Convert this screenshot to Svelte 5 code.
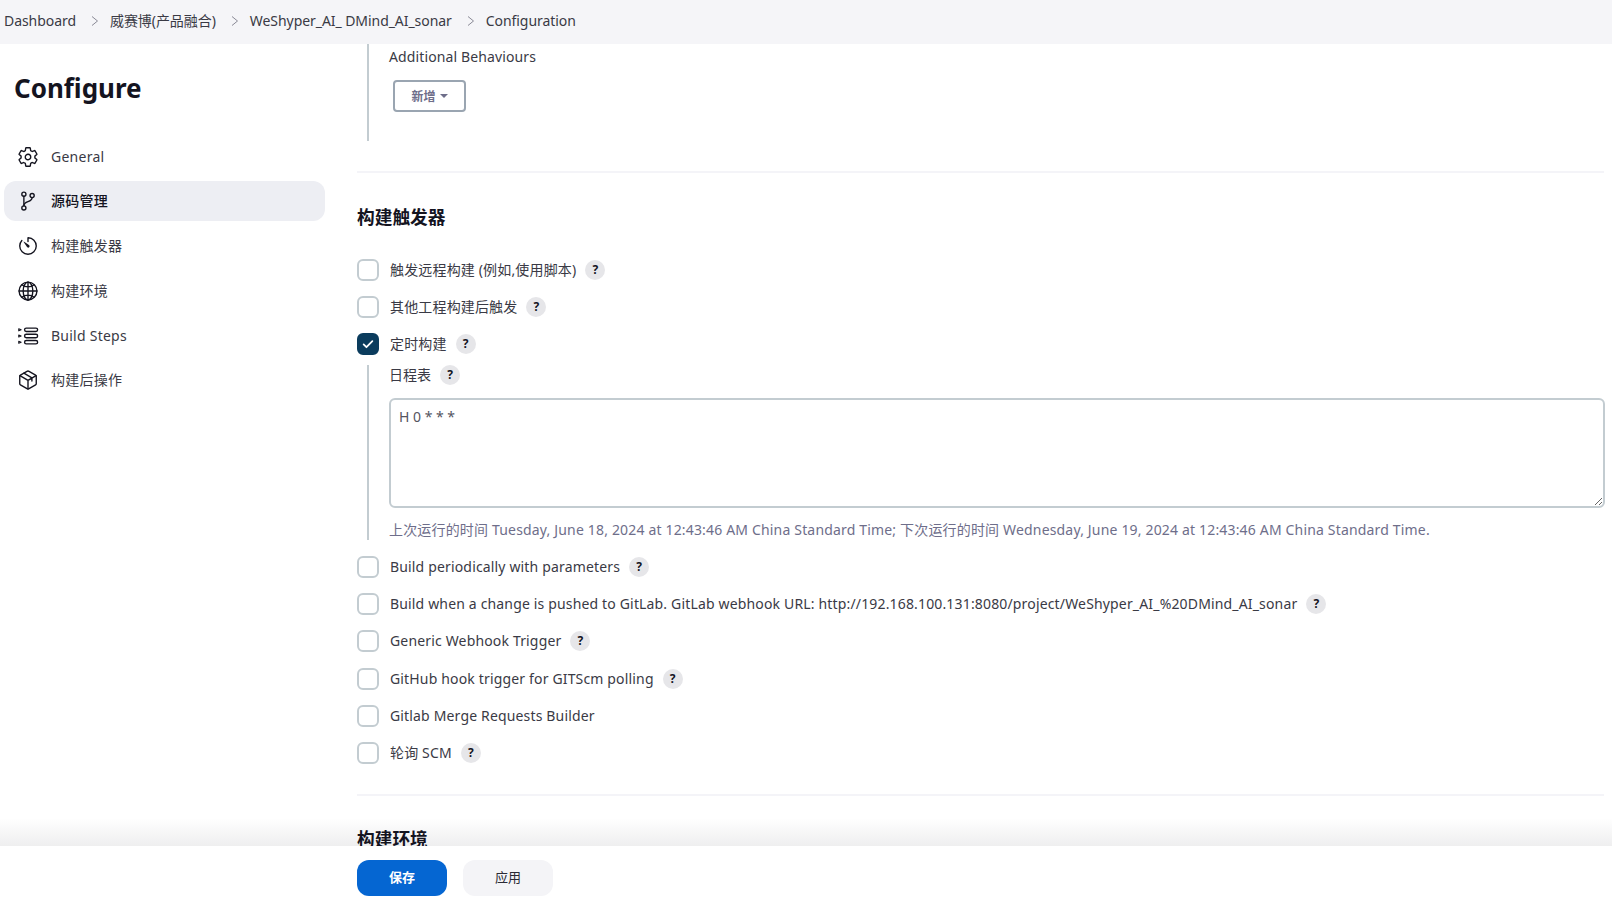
<script>
  const crumbs = ['Dashboard', '威赛博(产品融合)', 'WeShyper_AI_ DMind_AI_sonar', 'Configuration'];

  const tasks = [
    { id: 'general', label: 'General' },
    { id: 'scm', label: '源码管理', active: true },
    { id: 'trigger', label: '构建触发器' },
    { id: 'env', label: '构建环境' },
    { id: 'steps', label: 'Build Steps' },
    { id: 'post', label: '构建后操作' }
  ];

  const upper = [
    { label: '触发远程构建 (例如,使用脚本)', help: true },
    { label: '其他工程构建后触发', help: true },
    { label: '定时构建', help: true, checked: true }
  ];

  const lower = [
    { label: 'Build periodically with parameters', help: true },
    { label: 'Build when a change is pushed to GitLab. GitLab webhook URL: http://192.168.100.131:8080/project/WeShyper_AI_%20DMind_AI_sonar', help: true },
    { label: 'Generic Webhook Trigger', help: true },
    { label: 'GitHub hook trigger for GITScm polling', help: true },
    { label: 'Gitlab Merge Requests Builder' },
    { label: '轮询 SCM', help: true }
  ];
</script>

{#snippet check(row)}
  <div class="check">
    <span class="box" class:checked={row.checked}>
      {#if row.checked}
        <svg viewBox="0 0 16 16" width="14" height="14"><path d="M3 8.5l3.2 3.2L13 4.8" fill="none" stroke="#fff" stroke-width="2" stroke-linecap="round" stroke-linejoin="round" /></svg>
      {/if}
    </span>
    <span class="check-label">{row.label}</span>
    {#if row.help}<span class="help">?</span>{/if}
  </div>
{/snippet}

<div class="page">
  <nav class="crumbs">
    {#each crumbs as crumb, i}
      <span>{crumb}</span>
      {#if i < crumbs.length - 1}
        <svg class="sep" viewBox="0 0 10 12" width="10" height="12"><path d="M2 1.5L7.5 6 2 10.5" fill="none" stroke="#8a8a96" stroke-width="1" /></svg>
      {/if}
    {/each}
  </nav>

  <div class="body">
    <aside class="side">
      <h1>Configure</h1>
      <ul>
        {#each tasks as task}
          <li class:active={task.active}>
            <svg class="icon" viewBox="0 0 512 512" width="22" height="22" fill="none" stroke="#14141f" stroke-width="32" stroke-linecap="round" stroke-linejoin="round">
              {#if task.id === 'general'}
                <path d="M262.29 192.31a64 64 0 1057.4 57.4 64.13 64.13 0 00-57.4-57.4zM416.39 256a154.34 154.34 0 01-1.53 20.79l45.21 35.46a10.81 10.81 0 012.45 13.75l-42.77 74a10.81 10.81 0 01-13.14 4.59l-44.9-18.08a16.11 16.11 0 00-15.17 1.75A164.48 164.48 0 01325 400.8a15.94 15.94 0 00-8.82 12.14l-6.73 47.89a11.08 11.08 0 01-10.68 9.17h-85.54a11.11 11.11 0 01-10.69-8.87l-6.72-47.82a16.07 16.07 0 00-9-12.22 155.3 155.3 0 01-21.46-12.57 16 16 0 00-15.11-1.71l-44.89 18.07a10.81 10.81 0 01-13.14-4.58l-42.77-74a10.8 10.8 0 012.45-13.75l38.21-30a16.05 16.05 0 006-14.08c-.36-4.17-.58-8.33-.58-12.5s.21-8.27.58-12.35a16 16 0 00-6.07-13.94l-38.19-30A10.81 10.81 0 0149.48 186l42.77-74a10.81 10.81 0 0113.14-4.59l44.9 18.08a16.11 16.11 0 0015.17-1.75A164.48 164.48 0 01187 111.2a15.94 15.94 0 008.82-12.14l6.73-47.89A11.08 11.08 0 01213.23 42h85.54a11.11 11.11 0 0110.69 8.87l6.72 47.82a16.07 16.07 0 009 12.22 155.3 155.3 0 0121.46 12.57 16 16 0 0015.11 1.71l44.89-18.07a10.81 10.81 0 0113.14 4.58l42.77 74a10.8 10.8 0 01-2.45 13.75l-38.21 30a16.05 16.05 0 00-6.05 14.08c.33 4.14.55 8.3.55 12.47z" />
              {:else if task.id === 'scm'}
                <circle cx="160" cy="96" r="48" />
                <circle cx="160" cy="416" r="48" />
                <path d="M160 368V144" />
                <circle cx="352" cy="128" r="48" />
                <path d="M352 176c0 128-192 64-192 192" />
              {:else if task.id === 'trigger'}
                <path d="M112.91 128A191.85 191.85 0 0064 254c-1.18 106.35 85.65 193.8 192 194 106.2.2 192-85.83 192-192 0-104.54-83.55-189.61-187.5-192a4.36 4.36 0 00-4.5 4.37V152" />
                <path fill="#14141f" stroke="none" d="M233.38 278.63l-79-113a8.13 8.13 0 0111.32-11.32l113 79a32.5 32.5 0 01-37.25 53.26 33.21 33.21 0 01-8.07-7.94z" />
              {:else if task.id === 'env'}
                <path d="M256 48C141.13 48 48 141.13 48 256s93.13 208 208 208 208-93.13 208-208S370.87 48 256 48z" />
                <path d="M256 48c-58.07 0-112.67 93.13-112.67 208S197.93 464 256 464s112.67-93.13 112.67-208S314.07 48 256 48z" />
                <path d="M256 48v416M464 256H48M117.33 117.33c38.24 27.15 86.38 43.34 138.67 43.34s100.43-16.19 138.67-43.34M394.67 394.67c-38.24-27.15-86.38-43.34-138.67-43.34s-100.43 16.19-138.67 43.34" />
              {:else if task.id === 'steps'}
                <rect x="176" y="72" width="304" height="80" rx="40" />
                <rect x="176" y="216" width="304" height="80" rx="40" />
                <rect x="176" y="360" width="304" height="80" rx="40" />
                <path stroke-width="24" d="M40 88l56 24-56 24zM40 232l56 24-56 24zM40 376l56 24-56 24z" />
              {:else}
                <path d="M448 341.37V170.61A32 32 0 00432.11 143l-152-88.46a47.94 47.94 0 00-48.24 0L79.89 143A32 32 0 0064 170.61v170.76A32 32 0 0079.89 369l152 88.46a48 48 0 0048.24 0l152-88.46A32 32 0 00448 341.37z" />
                <path d="M69 154l187 110 187-110M256 464V264M160 96l187 110v76" />
              {/if}
            </svg>
            <span>{task.label}</span>
          </li>
        {/each}
      </ul>
    </aside>

    <main class="main">
      <div class="nested top">
        <div class="field-label">Additional Behaviours</div>
        <button class="add" type="button">新增 <i class="caret"></i></button>
      </div>
      <hr class="rule-a" />
      <h2>构建触发器</h2>

      <div class="checks">
        {#each upper as row}
          {@render check(row)}
        {/each}
      </div>

      <div class="nested schedule">
        <div class="sched-label">日程表 <span class="help">?</span></div>
        <textarea spellcheck="false">H 0 * * *</textarea>
        <div class="hint">上次运行的时间 Tuesday, June 18, 2024 at 12:43:46 AM China Standard Time; 下次运行的时间 Wednesday, June 19, 2024 at 12:43:46 AM China Standard Time.</div>
      </div>

      <div class="checks lower">
        {#each lower as row}
          {@render check(row)}
        {/each}
      </div>

      <hr class="rule-b" />
      <h2 class="clipped">构建环境</h2>
    </main>
  </div>

  <footer class="bar">
    <button class="save" type="button">保存</button>
    <button class="apply" type="button">应用</button>
  </footer>
</div>

<style>
  :global(body) {
    margin: 0;
    background: #fff;
  }

  .page {
    position: relative;
    width: 1612px;
    height: 904px;
    overflow: hidden;
    color: #14141f;
    font: 14px/20px "Noto Sans", "Noto Sans CJK SC", sans-serif;
  }

  .crumbs {
    display: flex;
    align-items: center;
    height: 44px;
    padding: 0 4px 2px;
    box-sizing: border-box;
    background: #f5f5f8;
    color: #3a3a45;
    letter-spacing: -0.06px;
  }

  .sep {
    margin: 0 10px 0 14px;
  }

  .body {
    display: grid;
    grid-template-columns: 357px 1247px;
  }

  .side {
    padding: 0 4px;
  }

  h1 {
    margin: 25px 0 0 10px;
    font-size: 26px;
    line-height: 38px;
    font-weight: 700;
  }

  ul {
    list-style: none;
    margin: 29.5px 0 0;
    padding: 0;
    width: 321px;
  }

  li {
    display: flex;
    align-items: center;
    gap: 12px;
    height: 40px;
    margin-bottom: 4.75px;
    padding-left: 13px;
    border-radius: 12px;
    color: #3a3a45;
    letter-spacing: 0.25px;
  }

  li.active {
    background: #edeef3;
    color: #14141f;
    font-weight: 500;
  }

  .icon {
    flex: none;
  }

  .nested {
    margin-left: 10px;
    padding-left: 20px;
    border-left: 2px solid #c3ccd1;
  }

  .top {
    height: 97px;
  }

  .field-label {
    padding-top: 3px;
    color: #3a3a45;
    letter-spacing: 0.12px;
  }

  .add {
    display: flex;
    align-items: center;
    justify-content: center;
    gap: 4px;
    width: 73px;
    height: 32px;
    margin: 13px 0 0 4px;
    border: 2px solid #9aa5b1;
    border-radius: 4px;
    background: #fff;
    color: #6e6e8a;
    font: 600 12px "Noto Sans", "Noto Sans CJK SC", sans-serif;
  }

  .caret {
    border: 4px solid transparent;
    border-top-color: #6e6e8a;
    border-bottom: 0;
  }

  hr {
    height: 2px;
    margin: 0;
    border: 0;
    background: #f4f4f8;
  }

  .rule-a {
    margin-top: 30px;
  }

  h2 {
    margin: 31.5px 0 0;
    font-size: 17.7px;
    line-height: 24px;
    font-weight: 700;
  }

  h2.clipped {
    margin-top: 31px;
  }

  .checks {
    display: flex;
    flex-direction: column;
    gap: 15px;
    margin-top: 30.5px;
  }

  .lower {
    margin-top: 15.5px;
    gap: 15.4px;
  }

  .check {
    display: flex;
    align-items: center;
    height: 22px;
  }

  .box {
    flex: none;
    display: flex;
    align-items: center;
    justify-content: center;
    box-sizing: border-box;
    width: 22px;
    height: 22px;
    margin-right: 11px;
    border: 2px solid #c3ccd1;
    border-radius: 6px;
  }

  .box.checked {
    background: #0b3c5d;
    border-color: #0b3c5d;
  }

  .check-label {
    margin-right: 9px;
    color: #3a3a45;
    letter-spacing: 0.16px;
  }

  .help {
    flex: none;
    display: inline-flex;
    align-items: center;
    justify-content: center;
    width: 20px;
    height: 20px;
    border-radius: 50%;
    background: #e6e6e9;
    color: #14141f;
    font-size: 12px;
    font-weight: 700;
  }

  .schedule {
    margin-top: 10px;
    height: 175px;
  }

  .sched-label {
    display: flex;
    align-items: center;
    gap: 9px;
    height: 20px;
    color: #3a3a45;
  }

  textarea {
    display: block;
    box-sizing: border-box;
    width: 1216px;
    height: 110px;
    margin-top: 13px;
    padding: 7px 8px;
    border: 2px solid #c3ccd1;
    border-radius: 6px;
    background: #fff;
    color: #55555f;
    font: 14px/20px "Noto Sans", "Noto Sans CJK SC", sans-serif;
    outline: none;
  }

  .hint {
    margin-top: 12px;
    color: #6e6e8a;
    letter-spacing: 0.17px;
    white-space: nowrap;
  }

  .rule-b {
    margin-top: 30px;
  }

  .bar {
    position: absolute;
    left: 0;
    right: 0;
    bottom: 0;
    display: flex;
    gap: 16px;
    height: 58px;
    padding: 14px 0 0 357px;
    box-sizing: border-box;
    background: #fff;
  }

  .bar::before {
    content: '';
    position: absolute;
    left: 0;
    right: 0;
    bottom: 100%;
    height: 28px;
    background: linear-gradient(rgba(20, 20, 31, 0), rgba(20, 20, 31, 0.07));
  }

  .bar button {
    width: 90px;
    height: 36px;
    padding: 0 0 3px;
    border: 0;
    border-radius: 12px;
    font: 13px "Noto Sans", "Noto Sans CJK SC", sans-serif;
  }

  .save {
    background: #0566d2;
    color: #fff;
    font-weight: 700 !important;
  }

  .apply {
    background: #f4f4f7;
    color: #2a2a35;
  }
</style>
